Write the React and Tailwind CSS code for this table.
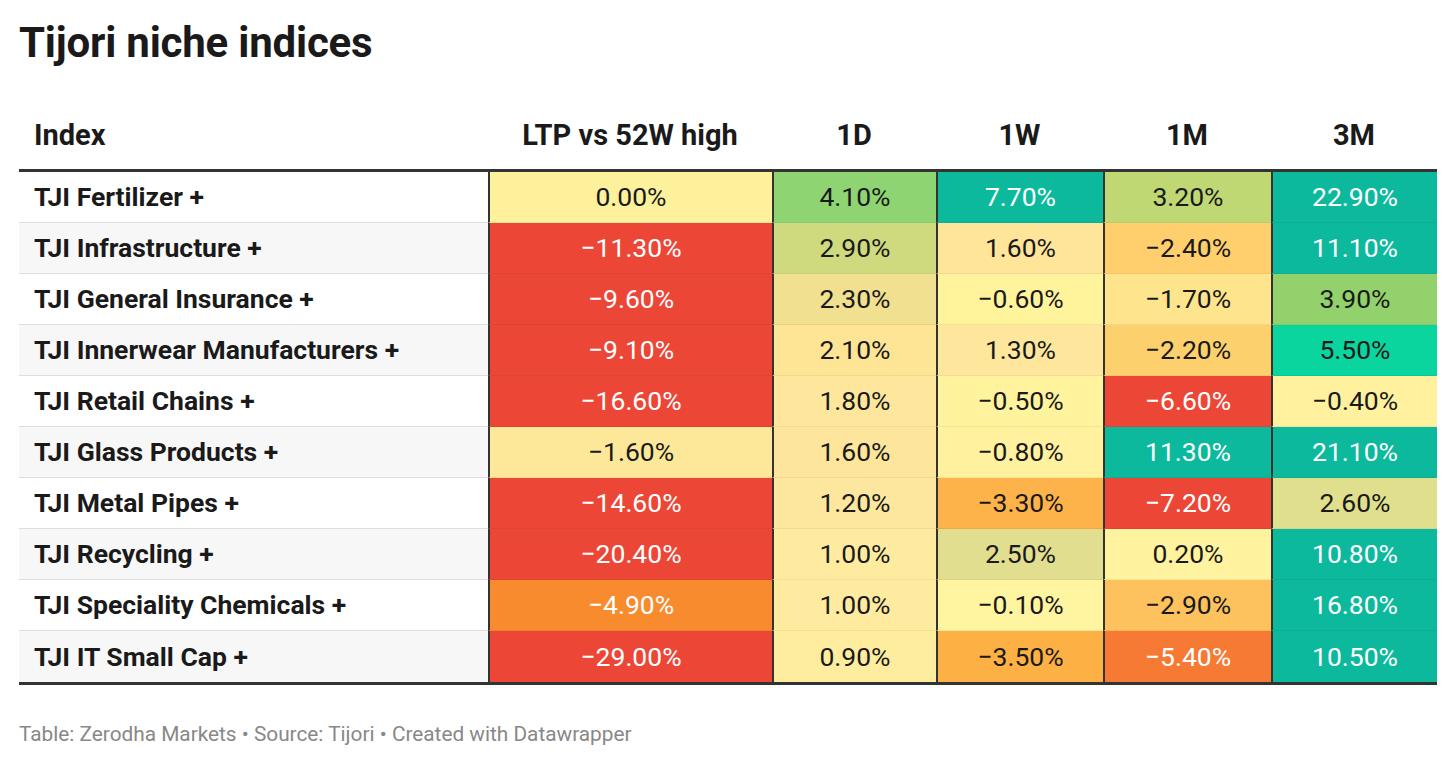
import React from 'react'

const W = '#ffffff'
const D = '#1a1a1a'

// value, background, text colour
const rows = [
    { name: 'TJI Fertilizer +', cells: [['0.00%', '#fef19c', D], ['4.10%', '#8fd473', D], ['7.70%', '#0cb99c', W], ['3.20%', '#bfd873', D], ['22.90%', '#0cb99c', W]] },
    { name: 'TJI Infrastructure +', cells: [['−11.30%', '#ec4637', W], ['2.90%', '#cfda7f', D], ['1.60%', '#fee59a', D], ['−2.40%', '#fecf6c', D], ['11.10%', '#0cb99c', W]] },
    { name: 'TJI General Insurance +', cells: [['−9.60%', '#ec4637', W], ['2.30%', '#f0e08f', D], ['−0.60%', '#fff39c', D], ['−1.70%', '#fee48c', D], ['3.90%', '#93d16c', D]] },
    { name: 'TJI Innerwear Manufacturers +', cells: [['−9.10%', '#ec4637', W], ['2.10%', '#fee596', D], ['1.30%', '#fee79c', D], ['−2.20%', '#fdd06e', D], ['5.50%', '#0ad59f', D]] },
    { name: 'TJI Retail Chains +', cells: [['−16.60%', '#ec4637', W], ['1.80%', '#fee79d', D], ['−0.50%', '#fff39e', D], ['−6.60%', '#ec4637', W], ['−0.40%', '#fff19d', D]] },
    { name: 'TJI Glass Products +', cells: [['−1.60%', '#fde89a', D], ['1.60%', '#fde59c', D], ['−0.80%', '#fff19e', D], ['11.30%', '#0cb99c', W], ['21.10%', '#0cb99c', W]] },
    { name: 'TJI Metal Pipes +', cells: [['−14.60%', '#ec4637', W], ['1.20%', '#fde69e', D], ['−3.30%', '#fdb24a', D], ['−7.20%', '#ec4637', W], ['2.60%', '#e0df8e', D]] },
    { name: 'TJI Recycling +', cells: [['−20.40%', '#ec4637', W], ['1.00%', '#feeba0', D], ['2.50%', '#e1de8f', D], ['0.20%', '#fff39f', D], ['10.80%', '#0cb99c', W]] },
    { name: 'TJI Speciality Chemicals +', cells: [['−4.90%', '#f98b2f', W], ['1.00%', '#feeba0', D], ['−0.10%', '#fff4a0', D], ['−2.90%', '#fdc25e', D], ['16.80%', '#0cb99c', W]] },
    { name: 'TJI IT Small Cap +', cells: [['−29.00%', '#ec4637', W], ['0.90%', '#feec9f', D], ['−3.50%', '#fdb043', D], ['−5.40%', '#f67a33', W], ['10.50%', '#0cb99c', W]] },
]

const headers = ['LTP vs 52W high', '1D', '1W', '1M', '3M']
const widths = ['w-[284px]', 'w-[164px]', 'w-[167px]', 'w-[168px]', 'w-[166px]']

export default function App() {
    return (
        <div className="min-h-screen bg-white pl-[19px] font-['Roboto',sans-serif] text-[#1a1a1a]">
            <h1 className="pt-[22px] text-[42px] font-bold leading-none tracking-[-0.2px]">Tijori niche indices</h1>

            <div className="mt-[36px] w-[1418px]">
                {/* header */}
                <div className="flex h-[72px] items-center border-b-[3px] border-[#333] text-[29px] font-bold pt-[2px]">
                    <div className="w-[469px] pl-[15px]">Index</div>
                    {headers.map((h, i) => (
                        <div key={h} className={`${widths[i]} text-center`}>{h}</div>
                    ))}
                </div>

                {/* body */}
                {rows.map((row, r) => (
                    <div key={row.name} className="flex h-[51px]">
                        <div className={`flex w-[469px] items-center border-b border-[#dedede] pl-[15px] text-[26.5px] font-bold ${r % 2 ? 'bg-[#f7f7f7]' : 'bg-white'} ${r === rows.length - 1 ? 'border-b-0' : ''}`}>
                            {row.name}
                        </div>
                        {row.cells.map(([v, bg, fg], c) => (
                            <div
                                key={c}
                                className={`${widths[c]} flex items-center justify-center border-l-2 border-l-[#333] text-[26.5px] ${r === rows.length - 1 ? '' : 'border-b border-b-black/5'}`}
                                style={{ backgroundColor: bg, color: fg }}
                            >
                                {v}
                            </div>
                        ))}
                    </div>
                ))}
                <div className="h-[3px] bg-[#333]" />
            </div>

            <p className="mt-[34px] text-[20.8px] text-[#888]">
                Table: Zerodha Markets • Source: Tijori • Created with Datawrapper
            </p>
        </div>
    )
}
